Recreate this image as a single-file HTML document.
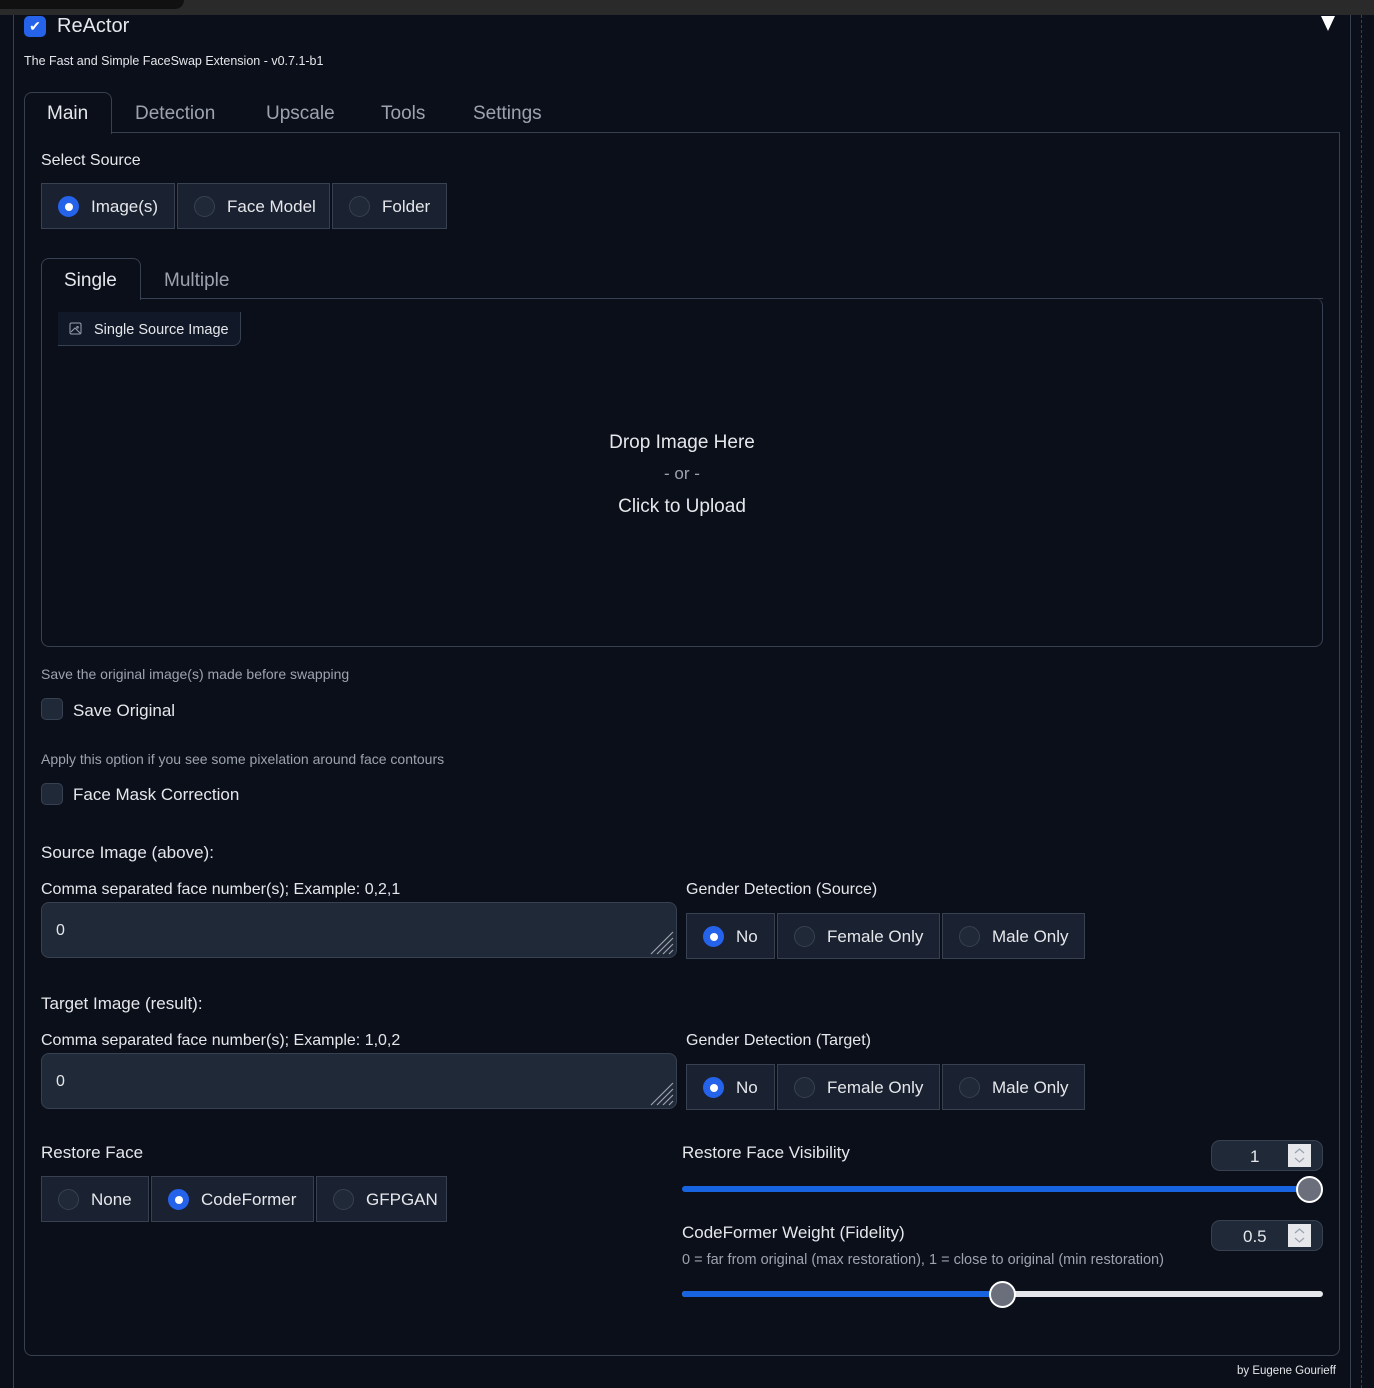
<!DOCTYPE html>
<html><head><meta charset="utf-8"><style>
*{box-sizing:border-box;margin:0;padding:0}
body{width:1374px;height:1388px;background:#0b0f19;font-family:"Liberation Sans",sans-serif;color:#e5e7eb;position:relative;overflow:hidden}
.a{position:absolute;white-space:nowrap}
.t16{font-size:16px}
.muted{color:#9ca3af}
.box{position:absolute;border:1px solid #374151}
.rb{position:absolute;height:46px;background:#1a2130;border:1px solid #374151;font-size:17px;display:flex;align-items:center;padding-left:16px;padding-top:2px;color:#e5e7eb}
.rb i{display:inline-block;width:21px;height:21px;border-radius:50%;border:1px solid #374151;background:#1f2937;margin-right:12px;margin-top:-2px}
.rb i.on{background:#2563eb;border-color:#2563eb;position:relative}
.rb i.on:after{content:"";position:absolute;left:6px;top:6px;width:8px;height:8px;border-radius:50%;background:#fff}
.cb{position:absolute;width:22px;height:22px;border-radius:5px;background:#1f2937;border:1px solid #374151}
.ta{position:absolute;height:56px;background:#1f2937;border:1px solid #374151;border-radius:8px;font-size:16px;padding:19px 14px}
.ta svg{position:absolute;right:2px;bottom:2px}
.num{position:absolute;width:112px;height:31px;background:#1f2937;border:1px solid #374151;border-radius:9px;font-size:17px}
.spin{position:absolute;right:11px;top:3px;width:23px;height:23px;background:#e5e7eb}
</style></head><body>
<div class="a" style="left:0;top:0;width:1374px;height:15px;background:#2a2a2a"></div>
<div class="a" style="left:0;top:0;width:184px;height:9px;background:#111;border-radius:0 0 10px 0"></div>
<div class="a" style="left:13px;top:15px;width:1px;height:1373px;background:#374151"></div>
<div class="a" style="left:1350px;top:15px;width:1px;height:1373px;background:#374151"></div>
<div class="a" style="left:1361px;top:15px;height:1373px;border-left:1px dashed #374151"></div>
<div class="a" style="left:24px;top:16px;width:22px;height:21px;border-radius:5px;background:#2563eb;color:#fff;font-size:14px;text-align:center;line-height:21px">✔</div>
<div class="a" style="left:57px;top:15px;font-size:20px">ReActor</div>
<div class="a" style="left:1321px;top:16px;width:0;height:0;border-left:7px solid transparent;border-right:7px solid transparent;border-top:15px solid #fff"></div>
<div class="a" style="left:24px;top:54px;font-size:12.5px">The Fast and Simple FaceSwap Extension - v0.7.1-b1</div>

<div class="box" style="left:24px;top:132px;width:1316px;height:1224px;border-radius:0 0 8px 8px;border-top:none"></div>
<div class="a" style="left:111px;top:132px;width:1229px;height:1px;background:#374151"></div>
<div class="a" style="left:24px;top:92px;width:88px;height:42px;border:1px solid #374151;border-bottom:none;border-radius:8px 8px 0 0;background:#0b0f19"></div>
<div class="a" style="left:47px;top:103px;font-size:19px">Main</div>
<div class="a muted" style="left:135px;top:103px;font-size:19px">Detection</div>
<div class="a muted" style="left:266px;top:103px;font-size:19px">Upscale</div>
<div class="a muted" style="left:381px;top:103px;font-size:19px">Tools</div>
<div class="a muted" style="left:473px;top:103px;font-size:19px">Settings</div>

<div class="a t16" style="left:41px;top:152px">Select Source</div>
<div class="rb" style="left:41px;top:183px;width:134px"><i class="on"></i>Image(s)</div>
<div class="rb" style="left:177px;top:183px;width:153px"><i></i>Face Model</div>
<div class="rb" style="left:332px;top:183px;width:115px"><i></i>Folder</div>

<div class="box" style="left:41px;top:298px;width:1282px;height:349px;border-radius:0 8px 8px 8px;border-top:none"></div>
<div class="a" style="left:140px;top:298px;width:1183px;height:1px;background:#374151"></div>
<div class="a" style="left:41px;top:258px;width:100px;height:42px;border:1px solid #374151;border-bottom:none;border-radius:8px 8px 0 0;background:#0b0f19"></div>
<div class="a" style="left:64px;top:270px;font-size:19px">Single</div>
<div class="a muted" style="left:164px;top:270px;font-size:19px">Multiple</div>
<div class="a" style="left:58px;top:312px;width:183px;height:34px;background:#111827;border:1px solid #374151;border-left:none;border-top:none;border-radius:0 0 8px 0"></div>
<svg class="a" style="left:69px;top:322px" width="13" height="13" viewBox="0 0 13 13"><rect x="1" y="1" width="11" height="11" rx="1.5" fill="none" stroke="#9ca3af"/><path d="M2 10l4-4 5 5M8.5 4.5a.8.8 0 1 0 .01 0" fill="none" stroke="#9ca3af"/></svg>
<div class="a" style="left:94px;top:322px;font-size:14.5px">Single Source Image</div>
<div class="a" style="left:0;width:1364px;top:432px;text-align:center;font-size:19px">Drop Image Here</div>
<div class="a muted" style="left:0;width:1364px;top:464px;text-align:center;font-size:17px">- or -</div>
<div class="a" style="left:0;width:1364px;top:496px;text-align:center;font-size:19px">Click to Upload</div>

<div class="a muted" style="left:41px;top:666px;font-size:14px">Save the original image(s) made before swapping</div>
<div class="cb" style="left:41px;top:698px"></div>
<div class="a t16" style="left:73px;top:701px;font-size:17px">Save Original</div>
<div class="a muted" style="left:41px;top:751px;font-size:14px">Apply this option if you see some pixelation around face contours</div>
<div class="cb" style="left:41px;top:783px"></div>
<div class="a t16" style="left:73px;top:785px;font-size:17px">Face Mask Correction</div>

<div class="a t16" style="left:41px;top:843px;font-size:17px">Source Image (above):</div>
<div class="a t16" style="left:41px;top:881px">Comma separated face number(s); Example: 0,2,1</div>
<div class="ta" style="left:41px;top:902px;width:636px">0<svg width="28" height="28" viewBox="0 0 28 28"><path d="M27 5L5 27M27 11L11 27M27 17L17 27M27 23L23 27" stroke="#9ca3af" stroke-width="1.2"/></svg></div>
<div class="a t16" style="left:686px;top:881px">Gender Detection (Source)</div>
<div class="rb" style="left:686px;top:913px;width:89px"><i class="on"></i>No</div>
<div class="rb" style="left:777px;top:913px;width:163px"><i></i>Female Only</div>
<div class="rb" style="left:942px;top:913px;width:143px"><i></i>Male Only</div>

<div class="a t16" style="left:41px;top:994px;font-size:17px">Target Image (result):</div>
<div class="a t16" style="left:41px;top:1032px">Comma separated face number(s); Example: 1,0,2</div>
<div class="ta" style="left:41px;top:1053px;width:636px">0<svg width="28" height="28" viewBox="0 0 28 28"><path d="M27 5L5 27M27 11L11 27M27 17L17 27M27 23L23 27" stroke="#9ca3af" stroke-width="1.2"/></svg></div>
<div class="a t16" style="left:686px;top:1032px">Gender Detection (Target)</div>
<div class="rb" style="left:686px;top:1064px;width:89px"><i class="on"></i>No</div>
<div class="rb" style="left:777px;top:1064px;width:163px"><i></i>Female Only</div>
<div class="rb" style="left:942px;top:1064px;width:143px"><i></i>Male Only</div>

<div class="a t16" style="left:41px;top:1143px;font-size:17px">Restore Face</div>
<div class="rb" style="left:41px;top:1176px;width:108px"><i></i>None</div>
<div class="rb" style="left:151px;top:1176px;width:163px"><i class="on"></i>CodeFormer</div>
<div class="rb" style="left:316px;top:1176px;width:131px"><i></i>GFPGAN</div>

<div class="a t16" style="left:682px;top:1143px;font-size:17px">Restore Face Visibility</div>
<div class="num" style="left:1211px;top:1140px"><span class="a" style="left:38px;top:6px">1</span><div class="spin"><svg width="23" height="23" viewBox="0 0 23 23"><path d="M7 9l4.5-4 4.5 4M7 14l4.5 4 4.5-4" fill="none" stroke="#9ca3af" stroke-width="1.2"/></svg></div></div>
<div class="a" style="left:682px;top:1186px;width:627px;height:6px;border-radius:3px;background:#1763e0"></div>
<div class="a" style="left:1296px;top:1176px;width:27px;height:27px;border-radius:50%;background:#6b6e7b;border:2px solid #fff"></div>

<div class="a t16" style="left:682px;top:1223px;font-size:17px">CodeFormer Weight (Fidelity)</div>
<div class="num" style="left:1211px;top:1220px"><span class="a" style="left:31px;top:6px">0.5</span><div class="spin"><svg width="23" height="23" viewBox="0 0 23 23"><path d="M7 9l4.5-4 4.5 4M7 14l4.5 4 4.5-4" fill="none" stroke="#9ca3af" stroke-width="1.2"/></svg></div></div>
<div class="a muted" style="left:682px;top:1252px;font-size:14.5px">0 = far from original (max restoration), 1 = close to original (min restoration)</div>
<div class="a" style="left:682px;top:1291px;width:641px;height:6px;border-radius:3px;background:#e5e7eb"></div>
<div class="a" style="left:682px;top:1291px;width:320px;height:6px;border-radius:3px;background:#1763e0"></div>
<div class="a" style="left:989px;top:1281px;width:27px;height:27px;border-radius:50%;background:#6b6e7b;border:2px solid #fff"></div>

<div class="a" style="left:1237px;top:1365px;font-size:11.5px">by Eugene Gourieff</div>
</body></html>
